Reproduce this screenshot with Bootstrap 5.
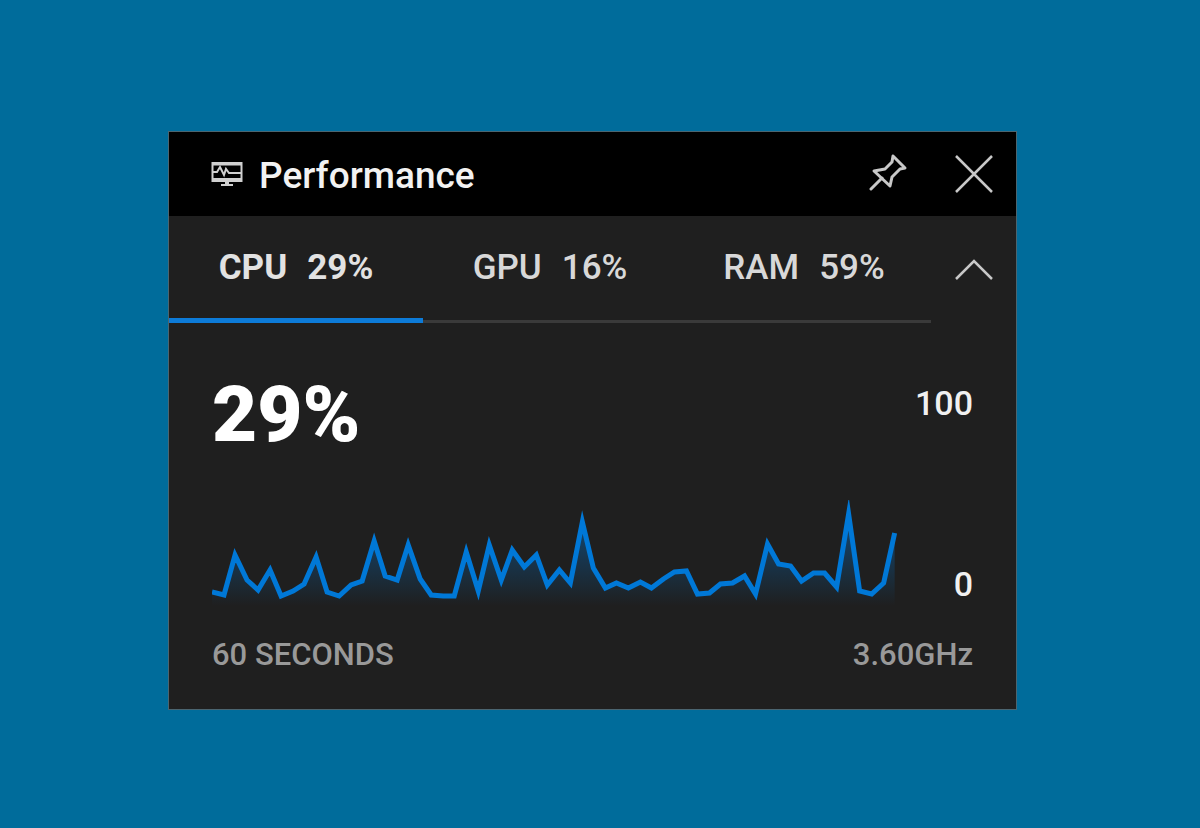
<!DOCTYPE html>
<html lang="en">
<head>
<meta charset="utf-8">
<meta name="viewport" content="width=device-width, initial-scale=1">
<title>Performance</title>
<link href="https://cdn.jsdelivr.net/npm/bootstrap@5.3.0/dist/css/bootstrap.min.css" rel="stylesheet">
<style>
  body { background: #006c9b; font-family: Roboto, "Liberation Sans", sans-serif; font-weight: 500; min-height: 100vh; padding: 131px 183px 40px 168px; }
  .widget { background: #1f1f1f; border: 1px solid #4b6570; color: #fff; }
  .widget svg { display: block; }
  .titlebar { background: #000; height: 84px; padding: 0 0 0 42px; }
  .titlebar h1 { font-size: 37px; line-height: 44px; color: #f2f2f2; font-weight: 500; padding-top: 3px; }
  .tool { width: 85px; height: 84px; padding: 0; border: 0; background: none; color: #c8c8c8; display: flex; align-items: center; justify-content: center; }
  .tabstrip { height: 107px; }
  .tabstrip .nav { border-bottom: 3px solid #3a3a3a; }
  .tabstrip .nav-link { height: 107px; border: 0; border-radius: 0; padding: 0 0 3px; margin-bottom: -3px; color: #d8d8d8; font-size: 35px; line-height: 40px; gap: 20px; background: none; }
  .tabstrip .nav-link.active { color: #e2e2e2; font-weight: 700; border-bottom: 5px solid #0d7bd8; padding: 2px 0 0; background: none; }
  .monitor { padding: 48px 43px 36px; }
  .reading { font-size: 78px; line-height: 88px; font-weight: 900; }
  .scale { font-size: 34px; line-height: 40px; color: #f0f0f0; }
  .scale-top { padding-top: 12px; }
  .scale-base { padding-bottom: 6px; }
  .plot-row { margin-top: 41px; }
  .plot { height: 110px; }
  .caption-row { font-size: 31px; line-height: 36px; color: #999; margin-top: 27px; }
</style>
</head>
<body>
<main class="widget">
  <header class="titlebar d-flex align-items-center">
    <svg width="32" height="26" viewBox="0 0 32 26" fill="none" stroke="#d0d0d0" stroke-width="2" aria-hidden="true">
      <path d="M1.500 2H30.500V20H1.500Z"/><path d="M1 3H31" stroke-width="3"/>
      <path d="M2 11H6L9 6L13 14L15 8L18 12H30" stroke-width="2"/>
      <path d="M2 19H30" stroke-width="4"/><path d="M16 20V24" stroke-width="4"/><path d="M10 24H22"/>
    </svg>
    <h1 class="mb-0 ms-3 me-auto">Performance</h1>
    <button class="tool" type="button" aria-label="Pin">
      <svg width="40" height="40" viewBox="0 0 40 40" fill="none" stroke="currentColor" stroke-width="3" stroke-linejoin="round" stroke-linecap="round" aria-hidden="true">
        <path d="M24 2L36 14L31 15L23 23L21 32L5 17L16 15L23 8Z"/><path d="M13 24L2 35"/>
      </svg>
    </button>
    <button class="tool" type="button" aria-label="Close">
      <svg width="40" height="40" viewBox="0 0 40 40" fill="none" stroke="currentColor" stroke-width="2.500" aria-hidden="true"><path d="M2 2L38 38M38 2L2 38"/></svg>
    </button>
  </header>

  <div class="tabstrip d-flex">
    <div class="nav nav-fill flex-grow-1" role="tablist">
      <button class="nav-link active d-flex flex-fill w-25 align-items-center justify-content-center" type="button" role="tab" aria-selected="true"><span>CPU</span><span>29%</span></button>
      <button class="nav-link d-flex flex-fill w-25 align-items-center justify-content-center" type="button" role="tab" aria-selected="false"><span>GPU</span><span>16%</span></button>
      <button class="nav-link d-flex flex-fill w-25 align-items-center justify-content-center" type="button" role="tab" aria-selected="false"><span>RAM</span><span>59%</span></button>
    </div>
    <button class="tool h-100" type="button" aria-label="Collapse">
      <svg width="40" height="22" viewBox="0 0 40 22" fill="none" stroke="currentColor" stroke-width="2.500" aria-hidden="true"><path d="M2 20L20 2L38 20"/></svg>
    </button>
  </div>

  <section class="monitor">
    <div class="d-flex justify-content-between align-items-start">
      <div class="reading">29%</div>
      <div class="scale scale-top">100</div>
    </div>
    <div class="plot-row d-flex justify-content-between align-items-end">
      <svg class="plot w-100 me-5" viewBox="0 0 693 110" preserveAspectRatio="none" role="img" aria-label="CPU use over 60 seconds">
        <defs><linearGradient id="fade" x1="0" y1="0" x2="0" y2="1"><stop offset="0" stop-color="#0078d7" stop-opacity=".5"/><stop offset="1" stop-color="#0078d7" stop-opacity="0"/></linearGradient></defs>
        <path fill="url(#fade)" d="M0 92L12 95L23 55L35 80L46 90L58 70L69 96L81 91L92 84L104 57L115 92L127 96L139 85L150 81L162 41L173 76L185 80L196 45L208 79L219 95L231 96L242 96L254 52L266 91L277 45L289 80L300 50L312 67L324 55L335 85L347 70L358 83L370 22L381 68L393 88L404 83L416 88L428 82L439 88L451 79L462 72L474 71L485 94L497 93L508 84L520 83L532 76L543 94L555 44L566 64L578 66L589 81L601 73L612 73L624 87L636 13L647 91L659 94L671 83L682 33V106H0Z"/>
        <path fill="none" stroke="#0078d7" stroke-width="5" stroke-miterlimit="10" d="M0 92L12 95L23 55L35 80L46 90L58 70L69 96L81 91L92 84L104 57L115 92L127 96L139 85L150 81L162 41L173 76L185 80L196 45L208 79L219 95L231 96L242 96L254 52L266 91L277 45L289 80L300 50L312 67L324 55L335 85L347 70L358 83L370 22L381 68L393 88L404 83L416 88L428 82L439 88L451 79L462 72L474 71L485 94L497 93L508 84L520 83L532 76L543 94L555 44L566 64L578 66L589 81L601 73L612 73L624 87L636 14L647 91L659 94L671 83L682 33"/>
      </svg>
      <div class="scale scale-base">0</div>
    </div>
    <div class="caption-row d-flex justify-content-between"><span>60 SECONDS</span><span>3.60GHz</span></div>
  </section>
</main>
<script src="https://cdn.jsdelivr.net/npm/bootstrap@5.3.0/dist/js/bootstrap.bundle.min.js"></script>
</body>
</html>
